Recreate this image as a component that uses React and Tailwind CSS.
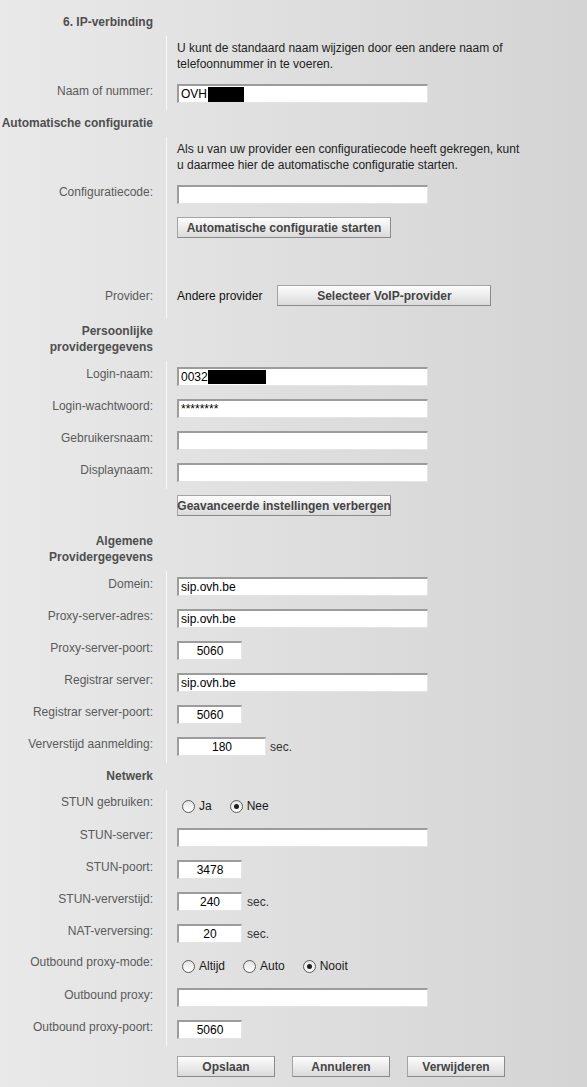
import React from "react";

function Field({ children, w = "w-[251px]", center = false }) {
  return (
    <div
      className={`${w} h-[19px] box-border bg-white border-t-2 border-l-2 border-b border-r border-t-[#9c9c9c] border-l-[#9c9c9c] border-b-[#e4e4e4] border-r-[#e4e4e4] flex items-center px-[2px] text-[12px] leading-[14px] text-black overflow-hidden whitespace-nowrap ${center ? "justify-center" : ""}`}
    >
      {children}
    </div>
  );
}

function Btn({ children, w = "w-[214px]" }) {
  return (
    <button
      type="button"
      className={`${w} h-[21px] box-border border border-[#a4a4a4] border-b-[#8a8a8a] border-r-[#8a8a8a] bg-[linear-gradient(to_bottom,#fdfdfd,#dadada)] text-[12px] leading-[14px] font-bold text-[#444] whitespace-nowrap flex items-center justify-center`}
    >
      {children}
    </button>
  );
}

function Radio({ label, checked }) {
  return (
    <div className="flex items-center gap-[4px] mr-[18px]">
      <span className="w-[13px] h-[13px] box-border rounded-full border border-[#5c5c5c] bg-[linear-gradient(to_bottom,#e4e4e4,#ffffff)] flex items-center justify-center">
        {checked && <span className="w-[5px] h-[5px] rounded-full bg-[#1e1e1e]" />}
      </span>
      <span className="text-[#1a1a1a]">{label}</span>
    </div>
  );
}

function Header({ children }) {
  return (
    <div className="w-[166px] text-right pr-[13px] pt-[5px] pb-[6px] font-bold text-[#4e4e4e] leading-[16px]">
      {children}
    </div>
  );
}

function Row({ label, children, h = "h-[32px]", labelPt = "pt-[5px]", contentPt = "pt-[6px]", line = true }) {
  return (
    <div className={`flex ${h}`}>
      <div className={`w-[166px] shrink-0 text-right pr-[13px] ${labelPt} text-[#5a5a5a] leading-[16px]`}>
        {label}
      </div>
      <div
        className={`flex-1 border-l ${line ? "border-[#f8f8f8]" : "border-transparent"} pl-[10px] ${contentPt}`}
      >
        {children}
      </div>
    </div>
  );
}

export default function App() {
  return (
    <div className="w-[587px] min-h-[1087px] bg-[linear-gradient(to_right,#e9e9e9,#d4d4d4)] font-['Liberation_Sans',Arial,sans-serif] text-[12px] text-[#222] pt-[9px]">
      <Header>6. IP-verbinding</Header>
      <Row label="" h="h-[42px]" contentPt="pt-[4px]">
        <p className="leading-[16px] text-[#222]">
          U kunt de standaard naam wijzigen door een andere naam of
          <br />
          telefoonnummer in te voeren.
        </p>
      </Row>
      <Row label="Naam of nummer:">
        <Field>
          <span>OVH</span>
          <span className="inline-block w-[36px] h-[15px] bg-black ml-[1px]" />
        </Field>
      </Row>

      <Header>Automatische configuratie</Header>
      <Row label="" h="h-[42px]" contentPt="pt-[4px]">
        <p className="leading-[16px] text-[#222]">
          Als u van uw provider een configuratiecode heeft gekregen, kunt
          <br />
          u daarmee hier de automatische configuratie starten.
        </p>
      </Row>
      <Row label="Configuratiecode:">
        <Field />
      </Row>
      <Row label="" h="h-[68px]">
        <Btn>Automatische configuratie starten</Btn>
      </Row>
      <Row label="Provider:" h="h-[39px]" labelPt="pt-[9px]">
        <div className="flex items-center h-[21px]">
          <span className="text-[#111]">Andere provider</span>
          <div className="ml-[15px]">
            <Btn>Selecteer VoIP-provider</Btn>
          </div>
        </div>
      </Row>

      <Header>
        Persoonlijke
        <br />
        providergegevens
      </Header>
      <Row label="Login-naam:">
        <Field>
          <span>0032</span>
          <span className="inline-block w-[58px] h-[14px] bg-black" />
        </Field>
      </Row>
      <Row label="Login-wachtwoord:">
        <Field>
          <span>********</span>
        </Field>
      </Row>
      <Row label="Gebruikersnaam:">
        <Field />
      </Row>
      <Row label="Displaynaam:">
        <Field />
      </Row>
      <Row label="" h="h-[39px]" line={false}>
        <Btn>Geavanceerde instellingen verbergen</Btn>
      </Row>

      <Header>
        Algemene
        <br />
        Providergegevens
      </Header>
      <Row label="Domein:">
        <Field>sip.ovh.be</Field>
      </Row>
      <Row label="Proxy-server-adres:">
        <Field>sip.ovh.be</Field>
      </Row>
      <Row label="Proxy-server-poort:">
        <Field w="w-[65px]" center>
          5060
        </Field>
      </Row>
      <Row label="Registrar server:">
        <Field>sip.ovh.be</Field>
      </Row>
      <Row label="Registrar server-poort:">
        <Field w="w-[65px]" center>
          5060
        </Field>
      </Row>
      <Row label="Ververstijd aanmelding:">
        <div className="flex items-center">
          <Field w="w-[89px]" center>
            180
          </Field>
          <span className="ml-[4px] text-[#333]">sec.</span>
        </div>
      </Row>

      <Header>Netwerk</Header>
      <Row label="STUN gebruiken:" labelPt="pt-[4px]" contentPt="pt-[8px]">
        <div className="flex items-center h-[16px] pl-[5px]">
          <Radio label="Ja" />
          <Radio label="Nee" checked />
        </div>
      </Row>
      <Row label="STUN-server:">
        <Field />
      </Row>
      <Row label="STUN-poort:">
        <Field w="w-[65px]" center>
          3478
        </Field>
      </Row>
      <Row label="STUN-ververstijd:">
        <div className="flex items-center">
          <Field w="w-[65px]" center>
            240
          </Field>
          <span className="ml-[5px] text-[#333]">sec.</span>
        </div>
      </Row>
      <Row label="NAT-verversing:">
        <div className="flex items-center">
          <Field w="w-[65px]" center>
            20
          </Field>
          <span className="ml-[5px] text-[#333]">sec.</span>
        </div>
      </Row>
      <Row label="Outbound proxy-mode:" labelPt="pt-[4px]" contentPt="pt-[8px]">
        <div className="flex items-center h-[16px] pl-[5px]">
          <Radio label="Altijd" />
          <Radio label="Auto" />
          <Radio label="Nooit" checked />
        </div>
      </Row>
      <Row label="Outbound proxy:">
        <Field />
      </Row>
      <Row label="Outbound proxy-poort:">
        <Field w="w-[65px]" center>
          5060
        </Field>
      </Row>

      <Row label="" h="h-[42px]" contentPt="pt-[10px]" line={false}>
        <div className="flex gap-[17px]">
          <Btn w="w-[98px]">Opslaan</Btn>
          <Btn w="w-[98px]">Annuleren</Btn>
          <Btn w="w-[98px]">Verwijderen</Btn>
        </div>
      </Row>
    </div>
  );
}
